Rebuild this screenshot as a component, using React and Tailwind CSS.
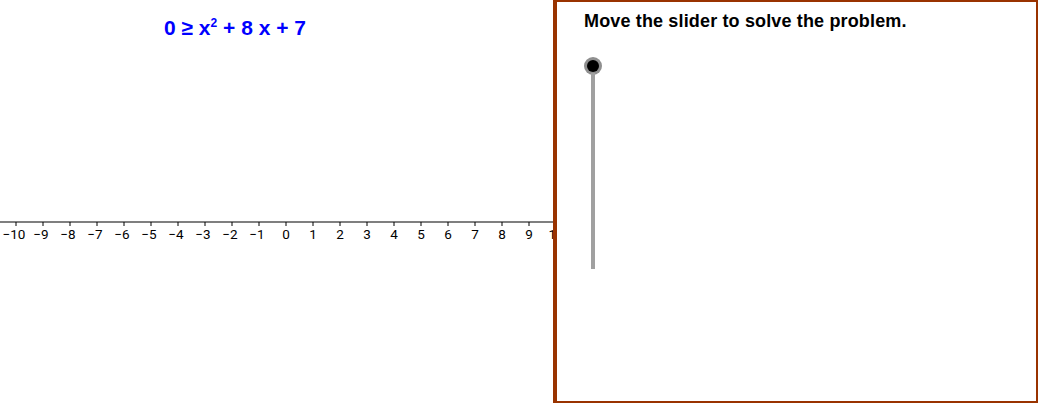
import React from 'react';

const ticks = Array.from({ length: 21 }, (_, i) => i - 10);

const NumberLine = () => {
  const origin = 286;
  const unit = 27;
  return (
    <svg width="553" height="30" className="block">
      <line x1="0" y1="1" x2="553" y2="1" stroke="#000" strokeWidth="1.2" />
      {ticks.map((t) => (
        <line
          key={t}
          x1={origin + t * unit}
          y1="1"
          x2={origin + t * unit}
          y2="5"
          stroke="#000"
          strokeWidth="1"
        />
      ))}
      {ticks.map((t) => (
        <text
          key={`l-${t}`}
          x={origin + t * unit - (t < 0 ? 2 : 0)}
          y="18"
          textAnchor="middle"
          fontSize="13.5"
          fontFamily="Roboto, sans-serif"
          fill="#000"
        >
          {t < 0 ? `\u2212${-t}` : t}
        </text>
      ))}
    </svg>
  );
};

const Slider = () => (
  <div className="flex flex-col items-center w-[18px]">
    <div className="w-[18px] h-[18px] rounded-full bg-[#8f8f8f] flex items-center justify-center">
      <div className="w-[12px] h-[12px] rounded-full bg-black" />
    </div>
    <div className="w-[4px] h-[196px] bg-[#a0a0a0] -mt-[2px]" />
  </div>
);

export default function App() {
  return (
    <div className="flex w-[1038px] h-[405px] bg-white overflow-hidden font-['Liberation_Sans',sans-serif]">
      <div className="w-[553px] flex flex-col">
        <div className="h-[221px] flex justify-center pt-[17px] pr-[83px]">
          <div className="text-[#0000ff] font-bold text-[21px] leading-none whitespace-nowrap">
            0 &ge; x<sup className="text-[12px] -top-[0.7em]">2</sup> + 8 x + 7
          </div>
        </div>
        <NumberLine />
      </div>
      <div className="w-[485px] h-[403px] border-l-4 border-t-2 border-r-2 border-b-2 border-[#993300] flex flex-col pl-[27px]">
        <div className="pt-[10px] text-[18px] tracking-[0.15px] font-bold text-black leading-none whitespace-nowrap">
          Move the slider to solve the problem.
        </div>
        <div className="mt-[27px]">
          <Slider />
        </div>
      </div>
    </div>
  );
}
